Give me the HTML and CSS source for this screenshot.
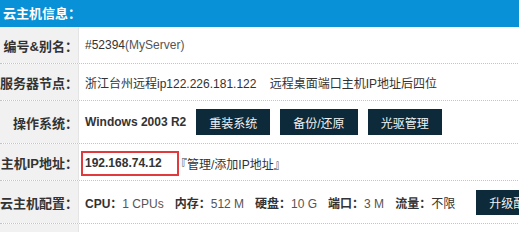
FILE: index.html
```html
<!DOCTYPE html>
<html lang="zh-CN">
<head>
<meta charset="utf-8">
<title>云主机信息</title>
<link rel="stylesheet" href="styles.css">
</head>
<body>
<div class="panel">
  <div class="head">云主机信息：</div>
  <div class="row">
    <div class="lbl">编号&amp;别名：</div>
    <div class="val"><span class="dark">#52394</span>(MyServer)</div>
  </div>
  <div class="row">
    <div class="lbl">服务器节点：</div>
    <div class="val dark">浙江台州远程ip122.226.181.122&nbsp;&nbsp;&nbsp;&nbsp;远程桌面端口主机IP地址后四位</div>
  </div>
  <div class="row tall">
    <div class="lbl">操作系统：</div>
    <div class="val"><b class="os">Windows 2003 R2</b><span class="btn">重装系统</span><span class="btn">备份/还原</span><span class="btn">光驱管理</span></div>
  </div>
  <div class="row">
    <div class="lbl">主机IP地址：</div>
    <div class="val ipval"><span class="ipbox">192.168.74.12</span><span class="iplink">『管理/添加IP地址』</span></div>
  </div>
  <div class="row tall">
    <div class="lbl">云主机配置：</div>
    <div class="val cfg">
      <span class="item"><b>CPU：</b>1 CPUs</span>
      <span class="item"><b>内存：</b>512 M</span>
      <span class="item"><b>硬盘：</b>10 G</span>
      <span class="item"><b>端口：</b>3 M</span>
      <span class="item"><b>流量：</b><span class="dark">不限</span></span>
      <span class="btn up">升级配置</span>
    </div>
  </div>
  <div class="row">
    <div class="lbl"></div>
    <div class="val"></div>
  </div>
</div>
</body>
</html>
```
FILE: styles.css
```css
html, body {
  margin: 0;
  padding: 0;
  background: #ffffff;
  overflow: hidden;
}
body {
  width: 519px;
  height: 232px;
  font-family: "Liberation Sans", "Noto Sans CJK SC", sans-serif;
  font-size: 12px;
  color: #333;
}
.panel {
  width: 560px;
}
.head {
  height: 27px;
  line-height: 27px;
  background: #0891d7;
  color: #fff;
  font-weight: bold;
  font-size: 13px;
  padding-left: 3px;
}
.row {
  display: grid;
  grid-template-columns: 79px 1fr;
  height: 37px;
  border-bottom: 1px dotted #c4c4c4;
  box-sizing: border-box;
}
.row.tall {
  height: 43px;
}
.lbl {
  display: flex;
  justify-content: flex-end;
  align-items: center;
  background: #f1f1f1;
  border-right: 1px solid #e4e4e4;
  font-weight: bold;
  font-size: 13px;
  color: #333;
  white-space: nowrap;
}
.val {
  display: flex;
  align-items: center;
  padding-left: 6px;
  white-space: nowrap;
  color: #555;
}
.dark {
  color: #333;
}
.os {
  color: #333;
  margin-right: 10px;
}
.btn {
  display: inline-flex;
  align-items: center;
  justify-content: center;
  height: 26px;
  padding: 0 13px;
  margin-right: 10px;
  background: #0c2a3a;
  color: #f2f2f2;
  font-size: 12px;
}
.ipval {
  padding-left: 2px;
  padding-top: 3px;
}
.ipbox {
  position: relative;
  z-index: 1;
  box-sizing: border-box;
  width: 98px;
  height: 25px;
  line-height: 21px;
  border: 2px solid #e03a3c;
  background: #fff;
  padding-left: 2px;
  font-weight: bold;
  color: #333;
}
.iplink {
  margin-left: -4px;
  color: #333;
}
.cfg .item {
  margin-right: 11px;
}
.cfg b {
  color: #333;
}
.btn.up {
  margin-left: 10px;
  height: 25px;
}
```
